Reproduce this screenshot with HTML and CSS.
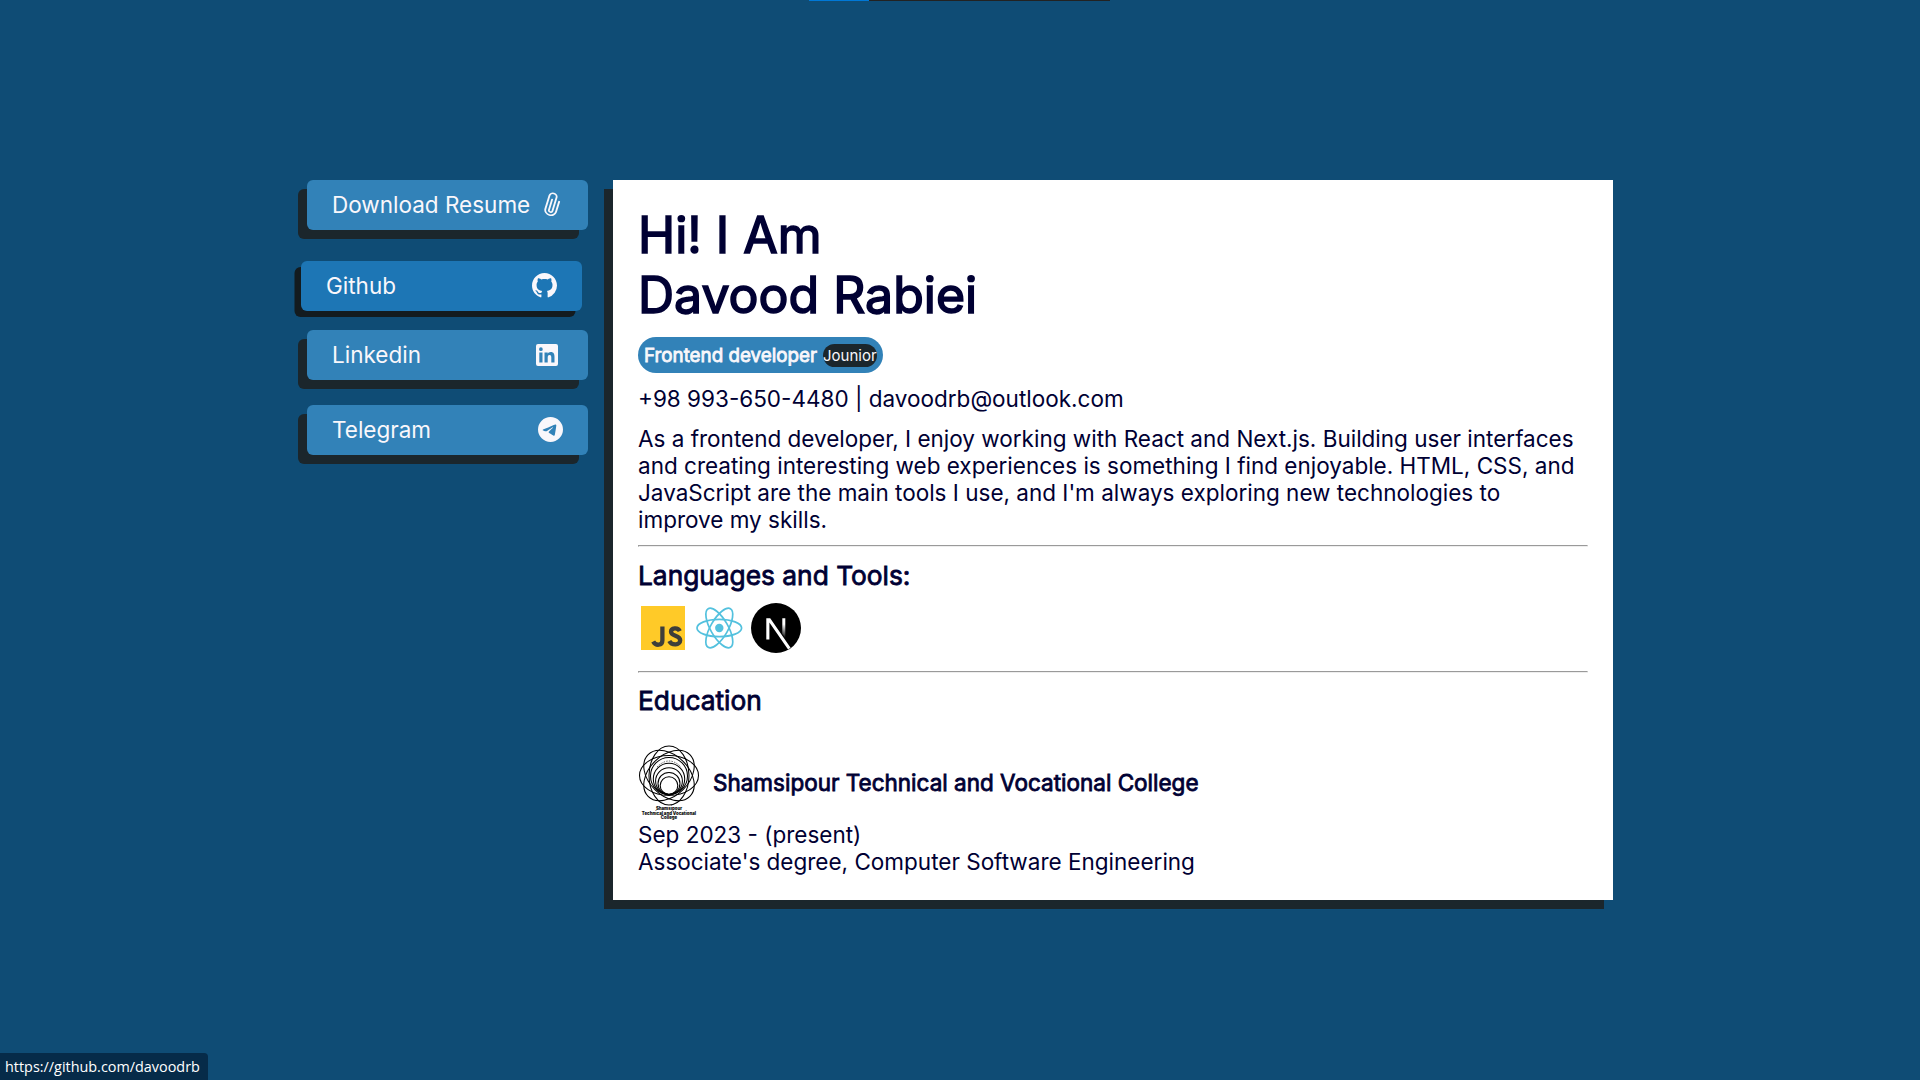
FILE: index.html
```html
<!DOCTYPE html>
<html lang="en">
<head>
<meta charset="utf-8">
<title>Davood Rabiei</title>
<link rel="stylesheet" href="styles.css">
</head>
<body>
<div class="progress"><div class="progress-fill"></div></div>
<main class="layout">
  <nav class="links">
    <a class="link">Download Resume
      <svg class="icon icon-clip" viewBox="0 0 16 16"><path fill="currentColor" transform="translate(8 8) rotate(17) scale(1.180 1) translate(-8 -8)" d="M4.500 3a2.500 2.500 0 0 1 5 0v9a1.500 1.500 0 0 1-3 0V5a.5.5 0 0 1 1 0v7a.5.5 0 0 0 1 0V3a1.500 1.500 0 1 0-3 0v9a2.500 2.500 0 0 0 5 0V5a.5.5 0 0 1 1 0v7a3.500 3.500 0 1 1-7 0z"/></svg></a>
    <a class="link link-active">Github
      <svg class="icon" viewBox="0 0 16 16"><path fill="currentColor" d="M8 0C3.580 0 0 3.580 0 8c0 3.540 2.290 6.530 5.470 7.590.4.070.55-.17.55-.38 0-.19-.01-.82-.01-1.490-2.010.37-2.530-.49-2.690-.94-.09-.23-.48-.94-.82-1.130-.28-.15-.68-.52-.01-.53.63-.01 1.080.58 1.230.82.72 1.210 1.870.87 2.330.66.070-.52.280-.87.510-1.070-1.780-.2-3.640-.89-3.640-3.950 0-.87.31-1.590.82-2.150-.08-.2-.36-1.020.08-2.120 0 0 .67-.21 2.200.82.64-.18 1.320-.27 2-.27s1.360.09 2 .27c1.530-1.040 2.200-.82 2.200-.82.44 1.100.16 1.920.08 2.120.51.56.82 1.270.82 2.150 0 3.070-1.870 3.750-3.650 3.950.29.25.54.73.54 1.480 0 1.070-.01 1.930-.01 2.200 0 .21.15.46.55.38A8.010 8.010 0 0 0 16 8c0-4.420-3.580-8-8-8z"/></svg></a>
    <a class="link">Linkedin
      <svg class="icon icon-linkedin" viewBox="0 0 22 22"><path fill="currentColor" fill-rule="evenodd" d="M2 0h18a2 2 0 0 1 2 2v18a2 2 0 0 1-2 2H2a2 2 0 0 1-2-2V2a2 2 0 0 1 2-2zM3.300 8.400v10.200h3.200V8.400zM4.900 3.300a1.850 1.850 0 1 0 0 3.700 1.850 1.850 0 0 0 0-3.700zM8.500 8.400v10.200h3.200v-5c0-1.400.3-2.700 1.900-2.700s1.700 1.500 1.700 2.800v4.900h3.200V13c0-2.700-.6-4.900-3.800-4.900-1.500 0-2.600.8-3 1.600V8.400z"/></svg></a>
    <a class="link">Telegram
      <svg class="icon" viewBox="0 0 16 16"><path fill="currentColor" d="M16 8A8 8 0 1 1 0 8a8 8 0 0 1 16 0zM8.287 5.906q-1.168.486-4.666 2.010-.567.225-.595.442c-.03.243.275.339.69.470l.175.055c.408.133.958.288 1.243.294q.39.010.868-.32 3.269-2.206 3.374-2.230c.05-.012.12-.026.166.016s.042.120.037.141c-.03.129-1.227 1.241-1.846 1.817-.193.180-.330.307-.358.336a8 8 0 0 1-.188.186c-.38.366-.664.640.015 1.088.327.216.589.393.850.571.284.194.568.387.936.629q.140.092.270.187c.331.236.630.448.997.414.214-.020.435-.220.547-.820.265-1.417.786-4.486.906-5.751a1.400 1.400 0 0 0-.013-.315.340.340 0 0 0-.114-.217.530.530 0 0 0-.310-.093c-.300.005-.763.166-2.984 1.090z"/></svg></a>
  </nav>
  <article class="card">
    <h1 class="name bold">Hi! I Am<br>Davood Rabiei</h1>
    <div class="role"><span class="role-title bold">Frontend developer</span><span class="level">Jounior</span></div>
    <p class="contact">+98 993-650-4480 | davoodrb@outlook.com</p>
    <p class="about">As a frontend developer, I enjoy working with React and Next.js. Building user interfaces and creating interesting web experiences is something I find enjoyable. HTML, CSS, and JavaScript are the main tools I use, and I'm always exploring new technologies to improve my skills.</p>
    <hr class="rule">
    <h2 class="heading bold">Languages and Tools:</h2>
    <div class="tools">
      <svg class="tool" viewBox="0 0 50 50"><path fill="#ffca28" d="M3 3h44v44H3z"/><path fill="none" stroke="#3e3e3a" stroke-width="4.300" d="M24.400 23.500v13.800c0 5.600-6.800 5.800-9.200 1.200M41.800 28.100c-2-4.200-8.800-3.400-8.800.7 0 4.700 9.200 3.200 9.200 8.400 0 5.200-8.400 5.500-10.900.7"/></svg>
      <svg class="tool" viewBox="0 0 50 50"><g fill="none" stroke="#53c1de" stroke-width="1.700"><ellipse cx="24.300" cy="25" rx="22.300" ry="8.700"/><ellipse cx="24.300" cy="25" rx="22.300" ry="8.700" transform="rotate(60 24.300 25)"/><ellipse cx="24.300" cy="25" rx="22.300" ry="8.700" transform="rotate(120 24.300 25)"/></g><circle cx="24.300" cy="25" r="4.200" fill="#53c1de"/></svg>
      <svg class="tool" viewBox="0 0 50 50"><defs><linearGradient id="fade" x1="0" y1="0" x2="0" y2="1"><stop offset=".3" stop-color="#fff"/><stop offset="1" stop-color="#fff" stop-opacity="0"/></linearGradient></defs><circle cx="25" cy="25" r="25"/><path fill="#fff" d="M15.300 15.200h3.900l20.400 29.500-2.500 1.700L18.400 19.400v17.200h-3.100z"/><path fill="url(#fade)" d="M31.300 15.200h3v20l-3-4.400z"/></svg>
    </div>
    <hr class="rule">
    <h2 class="heading heading-education bold">Education</h2>
    <div class="school">
      <svg class="crest" viewBox="0 0 62 75">
        <g fill="none" stroke="#000" stroke-width="1.050">
          <ellipse cx="31" cy="30.500" rx="29.500" ry="20"/>
          <ellipse cx="31" cy="30.500" rx="29.500" ry="20" transform="rotate(45 31 30.500)"/>
          <ellipse cx="31" cy="30.500" rx="29.500" ry="20" transform="rotate(90 31 30.500)"/>
          <ellipse cx="31" cy="30.500" rx="29.500" ry="20" transform="rotate(135 31 30.500)"/>
          <circle cx="31" cy="31" r="18.500"/>
          <circle cx="31" cy="33.900" r="15.700"/>
          <circle cx="31" cy="36.100" r="13.400"/>
          <circle cx="31" cy="38.400" r="11"/>
          <circle cx="31" cy="40.500" r="8.800"/>
          <path stroke-width="1" stroke-dasharray="1.500 1.200" stroke-opacity=".6" d="M19 22q12-12 24 0"/>
        </g>
        <g class="crest-text" text-anchor="middle"><text x="31" y="65.200">Shamsipour</text><text x="31" y="69.800">Technical and Vocational</text><text x="31" y="74.300">College</text></g>
      </svg>
      <h3 class="school-name bold">Shamsipour Technical and Vocational College</h3>
    </div>
    <p>Sep 2023 - (present)</p>
    <p>Associate's degree, Computer Software Engineering</p>
  </article>
</main>
<div class="status">https://github.com/davoodrb</div>
</body>
</html>
```
FILE: styles.css
```css
* { box-sizing: border-box; margin: 0; padding: 0; }
body {
  height: 1080px;
  overflow: hidden;
  background: #0f4c75;
  color: #000033;
  font: 22.500px/27px Inter, sans-serif;
}
.bold { font-weight: 400; -webkit-text-stroke: 0.8px currentColor; }
.layout {
  display: flex;
  align-items: flex-start;
  gap: 25px;
  padding: 180px 0 0 307px;
}
.links { display: flex; flex-direction: column; gap: 25px; width: 281px; }
.link {
  display: flex;
  align-items: center;
  justify-content: space-between;
  height: 50px;
  padding: 0 25px 1px;
  border-radius: 6px;
  background: #3282b8;
  color: #f9f7fb;
  box-shadow: -9px 9px #1b262c;
}
.link-active {
  background: #1d76b5;
  box-shadow: -6.500px 6px #131b1f;
  transform: translate(-6px, 6px);
}
.icon { width: 25px; height: 25px; flex: none; }
.icon-clip { margin-right: -2px; }
.icon-linkedin { width: 22px; height: 22px; margin-right: 5px; }
.card {
  width: 1000px;
  height: 720px;
  padding: 25px;
  background: #fff;
  box-shadow: -9px 9px #1b262c;
}
.name { font-size: 50px; line-height: 60px; -webkit-text-stroke-width: 1.600px; }
.role {
  display: flex;
  align-items: center;
  gap: 6px;
  width: 245px;
  height: 36px;
  margin-top: 12px;
  padding: 0 6px;
  border-radius: 18px;
  background: #3282b8;
  color: #f9f7fb;
  white-space: nowrap;
}
.role-title { font-size: 18.800px; }
.level {
  border-radius: 12px;
  background: #1b262c;
  font-size: 15px;
  line-height: 23px;
}
.contact { margin: 12px 0 13px; }
.rule { height: 2px; margin-top: 12px; border: 1px solid #eee; border-top-color: #9a9a9a; border-left-color: #9a9a9a; }
.heading { margin-top: 13px; font-size: 26.300px; line-height: 32px; }
.heading-education { margin-top: 12px; }
.tools { display: flex; gap: 6.500px; margin: 11px 0 18px; }
.tool { width: 50px; height: 50px; }
.school { display: flex; align-items: center; gap: 13px; margin: 28px 0 1px; }
.crest { width: 62px; height: 75px; }
.crest-text { font: 900 4.300px Inter, sans-serif; fill: #111; }
.school-name { font-size: 22.500px; }
.progress { position: absolute; top: 0; left: 809px; width: 301px; height: 1px; background: #222; }
.progress-fill { width: 60px; height: 1px; background: #0078d7; }
.status {
  position: absolute;
  left: 0;
  bottom: 0;
  width: 208px;
  height: 27px;
  padding-left: 5px;
  border-radius: 0 4px 0 0;
  background: #062b49;
  color: #fff;
  font: 14.400px/27px "Open Sans", sans-serif;
}
```
